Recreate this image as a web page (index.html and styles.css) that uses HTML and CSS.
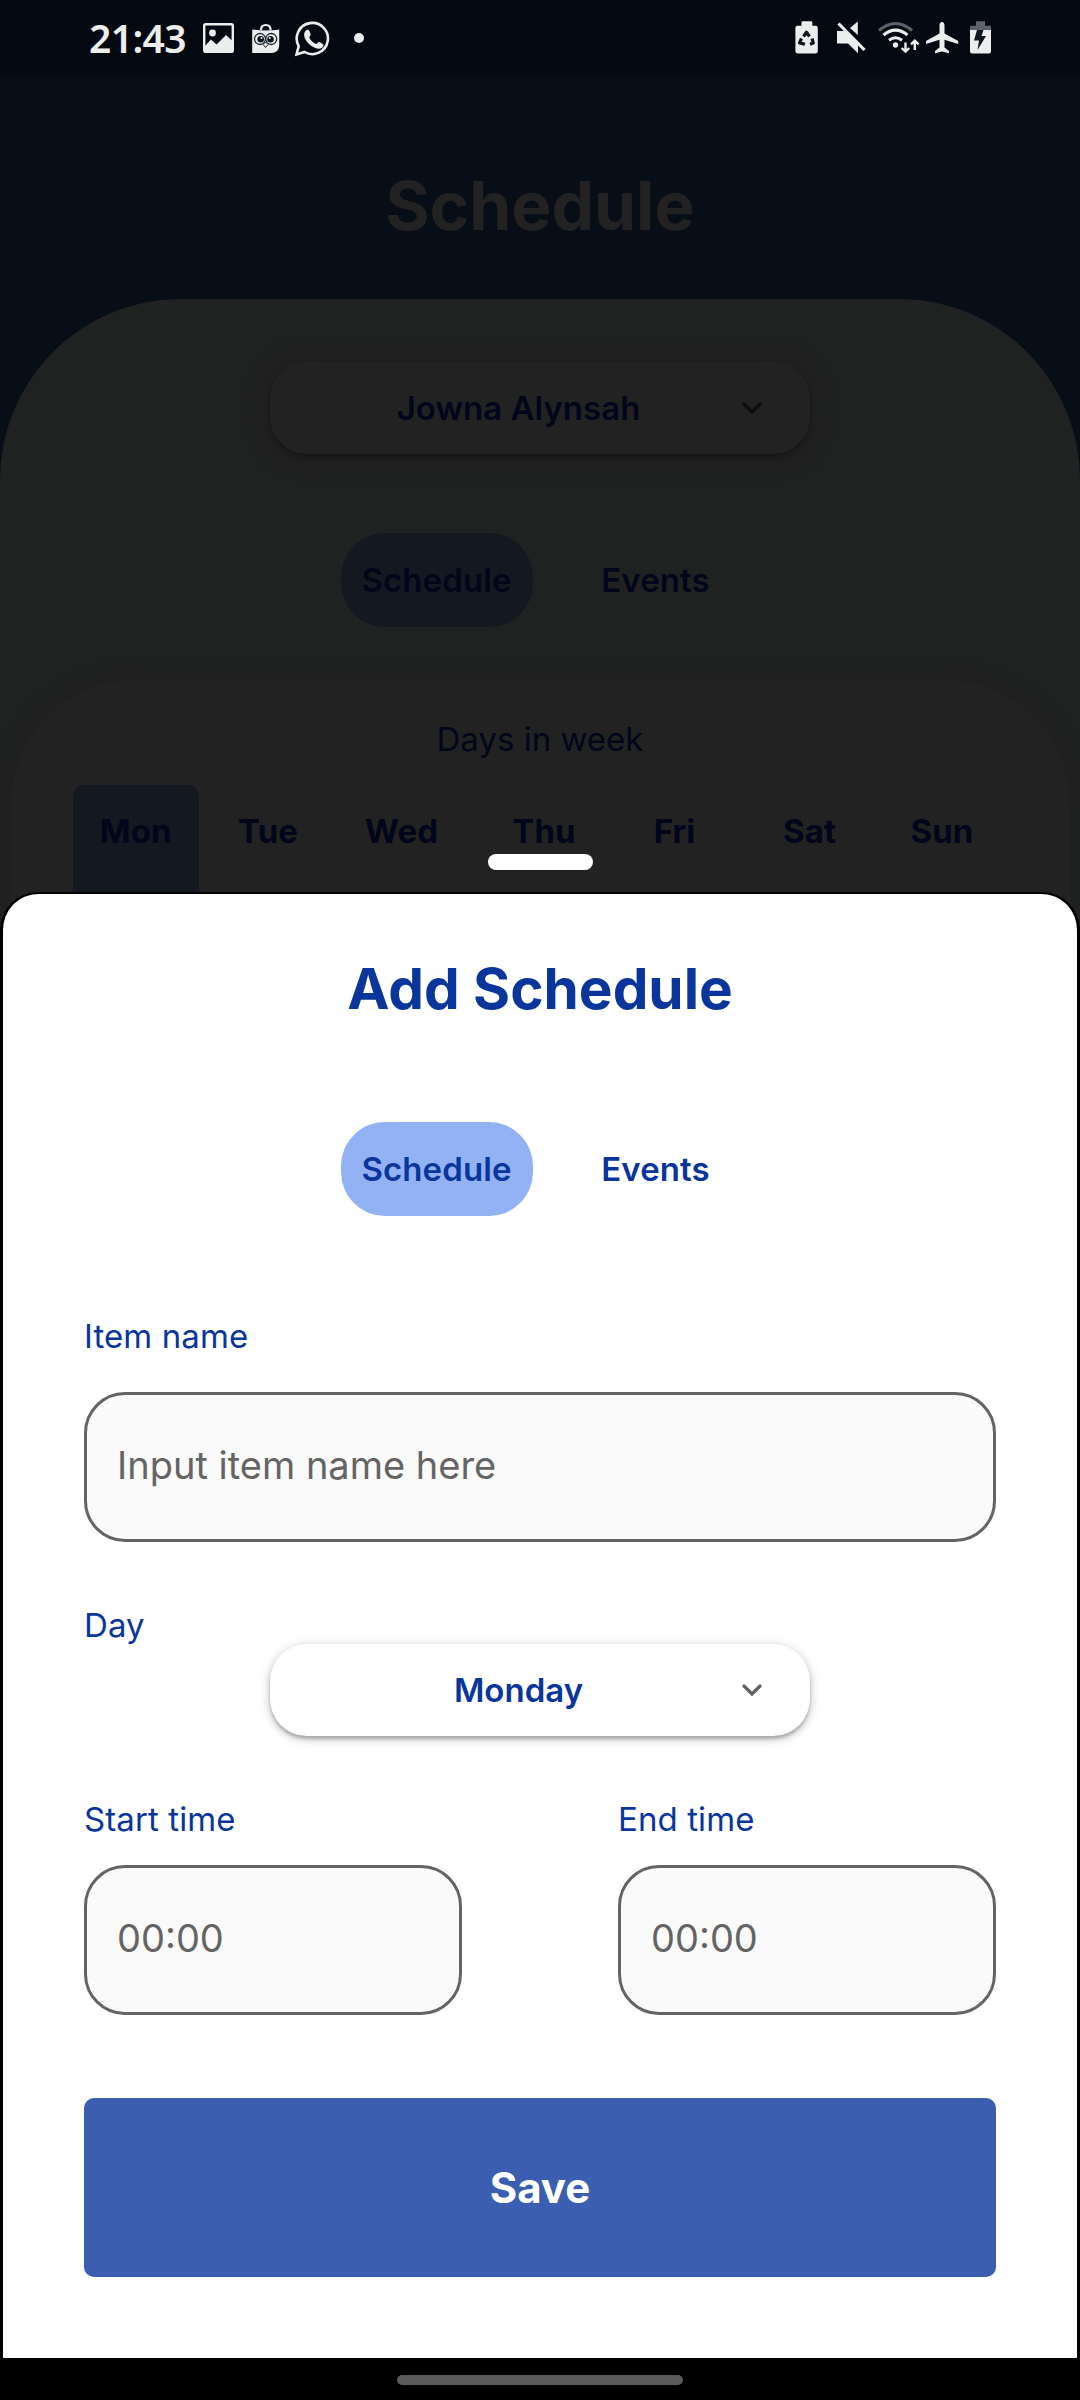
FILE: index.html
```html
<!DOCTYPE html>
<html lang="en">
<head>
<meta charset="utf-8">
<title>Add Schedule</title>
<link rel="stylesheet" href="styles.css">
</head>
<body>
<div class="screen">
  <header class="status">
    <span class="clock">21:43</span>
    <svg class="ico-gallery" width="31" height="40" viewBox="203 18 31 40"><rect x="204.2" y="24.2" width="28.6" height="27.6" rx="1.6" fill="none" stroke="#eceeee" stroke-width="2.4"/><circle cx="212.5" cy="33" r="3.4" fill="#eceeee"/><path d="M204 47l7-7.5 5.500 5 9.500-9.500 7 6.500v10.500h-29z" fill="#eceeee"/></svg>
    <svg class="ico-bag" width="28" height="40" viewBox="252 18 28 40"><path d="M261 30c0-3.500 2-5 4.800-5s4.800 1.500 4.800 5" fill="none" stroke="#eceeee" stroke-width="2.2"/><path d="M252.200 29.500c8 1.200 19 1.200 27 0v15.500c0 5-3 8-8 8h-19z" fill="#eceeee"/><g fill="#eceeee" stroke="#1b2630" stroke-width="1.300"><circle cx="260" cy="39" r="5.500"/><circle cx="271.200" cy="39" r="5.500"/></g><path d="M265.600 42l-2.500 2.500 2.500 3 2.500-3z" fill="#eceeee" stroke="#1b2630" stroke-width="1"/><g fill="#0c141d"><circle cx="260.700" cy="39.300" r="3.300"/><circle cx="270.500" cy="39.300" r="3.300"/></g><g fill="#eceeee"><circle cx="261.500" cy="38" r="1"/><circle cx="269.700" cy="38" r="1"/></g></svg>
    <svg class="ico-chat" width="35" height="40" viewBox="295 18 35 40"><path d="M296.500 54.500l2.200-8.400a15.600 15.600 0 1 1 5.800 5.900z" fill="none" stroke="#eceeee" stroke-width="2.600"/><path d="M306.200 30.200c1.200-.8 2.600-.6 3.100.6l1.400 3.400c.4 1-1.700 2.800-1.500 3.400 1.300 3 3.600 5.100 6.800 6.400.8.300 2.200-2.300 3.200-1.900l3.700 1.800c.9.500.7 2.700-.6 3.700-1.900 1.500-4.300 1.500-7 .4-5-2-8.600-5.500-10.500-9.800-1.300-3-.8-6.300 1.400-8z" fill="#eceeee"/></svg>
    <span class="more-dot"></span>
    <span class="spacer"></span>
    <svg class="ico-saver" width="24" height="40" viewBox="795 18 24 40"><path d="M801.500 22.500q0-1.300 1.300-1.300h8.200q1.300 0 1.300 1.300v3.200h3.400q2.100 0 2.100 2.100v23.500q0 2.100-2.100 2.100h-18.200q-2.100 0-2.100-2.100V27.800q0-2.100 2.100-2.100h4z" fill="#eceeee"/><path d="M803.500 36.500l3-4.200 3 4.200M812 38.500l1.300 4.600-3.300 1.200M801.500 38.500l-2 4.400 5.500 1.400" fill="none" stroke="#10171f" stroke-width="3.200" stroke-linejoin="round"/></svg>
    <svg class="ico-mute" width="30" height="40" viewBox="836 18 30 40"><path d="M837 31h6l2 .3 13 13v9l-10-9.800h-11zM850 28l7.800-6.500v13.500z" fill="#eceeee"/><path d="M838.500 23.500l26 26.500" stroke="#eceeee" stroke-width="3.200"/></svg>
    <svg class="ico-wifi" width="42" height="40" viewBox="878 18 42 40"><g fill="none" stroke-width="3"><path d="M879 30.500q16.500-14 33 0" stroke="#5e636b"/><path d="M883.500 35q12-9.800 24 0" stroke="#eceeee"/><path d="M889 40.200q6.500-4.900 13 0" stroke="#eceeee"/></g><circle cx="895.500" cy="45" r="2.700" fill="#eceeee"/><path d="M905.500 42.500v8.500m-3.800-3l3.800 3.600 3.800-3.600M914.800 50v-9m-3.800 3.300l3.800-3.600 3.800 3.600" fill="none" stroke="#eceeee" stroke-width="2.400"/></svg>
    <svg class="ico-plane" width="33" height="40" viewBox="926 18 33 40"><path d="M942 22c1.500 0 2.500 1.500 2.500 3.500v8l13.700 7.500v3l-13.700-4.200v7.700l4.500 3.500v2.300l-7-1.800-7 1.800V51l4.500-3.500v-7.700L926 44v-3l13.500-7.500v-8c0-2 1-3.500 2.500-3.500z" fill="#eceeee"/></svg>
    <svg class="ico-battery" width="21" height="40" viewBox="970 18 21 40"><path d="M976 21.300h9v4.400h6v4.300h-21v-4.300h6z" fill="#5e636b"/><path d="M970 30h21v21.500q0 2-2 2h-17q-2 0-2-2z" fill="#eceeee"/><path d="M977 30h6.500l-2 6h4.500l-8.500 14 1.500-9.500h-5z" fill="#10171f"/></svg>
  </header>

  <main class="page">
    <h1 class="page-title">Schedule</h1>
    <section class="panel">
      <div class="select select-dim"><span class="select-value">Jowna Alynsah</span><svg class="chevron" width="20" height="12" viewBox="0 0 20 12"><path d="M2 2l8 8 8-8" fill="none" stroke="currentColor" stroke-width="3.200" stroke-linecap="round"/></svg></div>
      <nav class="tabs tabs-dim"><span class="tab tab-active">Schedule</span><span class="tab">Events</span></nav>
      <div class="week">
        <p class="week-title">Days in week</p>
        <div class="days"><span class="day day-active">Mon</span><span class="day">Tue</span><span class="day">Wed</span><span class="day">Thu</span><span class="day">Fri</span><span class="day">Sat</span><span class="day">Sun</span></div>
      </div>
    </section>
  </main>

  <div class="modal">
    <span class="handle"></span>
    <form class="sheet">
      <h2 class="sheet-title">Add Schedule</h2>
      <nav class="tabs"><span class="tab tab-active">Schedule</span><span class="tab">Events</span></nav>
      <div class="label label-item">Item name</div>
      <div class="field">Input item name here</div>
      <div class="label label-day">Day</div>
      <div class="select"><span class="select-value">Monday</span><svg class="chevron" width="20" height="12" viewBox="0 0 20 12"><path d="M2 2l8 8 8-8" fill="none" stroke="currentColor" stroke-width="3.200" stroke-linecap="round"/></svg></div>
      <div class="times">
        <div class="time"><div class="label">Start time</div><div class="field">00:00</div></div>
        <div class="time"><div class="label">End time</div><div class="field">00:00</div></div>
      </div>
      <div class="save">Save</div>
    </form>
    <div class="navbar"><span class="pill"></span></div>
  </div>
</div>
</body>
</html>
```
FILE: styles.css
```css
* { box-sizing: border-box; }
body { margin: 0; font-family: Inter, sans-serif; font-optical-sizing: none; }
h1, h2, p { margin: 0; }

.screen { position: relative; width: 1080px; height: 2400px; overflow: hidden; background: #080e18; }

.status { display: flex; align-items: center; height: 76px; padding: 0 89px; background: #050a12; }
.status svg { flex: none; }
.clock { width: 100px; font: 600 39px/76px "Noto Sans", sans-serif; letter-spacing: -.6px; color: #eceeee; white-space: nowrap; }
.ico-gallery { margin-left: 14px; }
.ico-bag { margin-left: 18px; }
.ico-chat { margin-left: 15px; }
.more-dot { width: 10px; height: 10px; margin-left: 24px; border-radius: 50%; background: #eceeee; }
.spacer { flex: 1; }
.ico-mute { margin-left: 17px; }
.ico-wifi { margin-left: 12px; }
.ico-plane { margin-left: 6px; }
.ico-battery { margin-left: 11px; }

.page { display: flex; flex-direction: column; }
.page-title { padding-top: 90px; height: 223px; font-size: 67.5px; font-weight: 700; line-height: 80px; text-align: center; color: #222; }
.panel { display: flex; flex-direction: column; align-items: center; height: 720px; padding-top: 63px; border-radius: 181px 181px 0 0; background: #202221; }

.select { display: flex; flex: none; align-items: center; align-self: center; width: 540px; height: 92px; padding-left: 45px; padding-right: 48px; border-radius: 37px; background: #fff; color: #0a369c; box-shadow: 0 3px 3px rgba(0,0,0,.2), 0 3px 8px rgba(0,0,0,.14), 0 2px 14px rgba(0,0,0,.12); }
.select-value { flex: 1; padding-right: 29px; margin-right: -9px; font-size: 33px; font-weight: 600; line-height: 40px; text-align: center; }
.chevron { color: #616161; }
.select-dim { background: #222; color: #01061a; box-shadow: 0 3px 4px rgba(0,0,0,.2), 0 3px 10px rgba(10,0,0,.16), 0 1px 22px #201f1f; }
.select-dim .chevron { color: #0d0d0d; }

.tabs { display: flex; flex: none; align-self: center; gap: 47px; width: 399px; height: 94px; color: #0a369c; }
.tab { display: flex; align-items: center; justify-content: center; height: 94px; width: 152px; border-radius: 44px; font-size: 33px; font-weight: 600; line-height: 40px; letter-spacing: .1px; }
.tab-active { width: 192px; background: #92b2f4; }
.tabs-dim { margin-top: 79px; color: #01061a; }
.tabs-dim .tab-active { background: #131821; }

.week { flex: none; width: 1059px; height: 330px; margin-top: 53px; padding: 39px 0 0 62.500px; border-radius: 124px 124px 0 0; background: #222; color: #01061a; box-shadow: 0 0 18px #1f1f1f; }
.week-title { padding-right: 62.500px; font-size: 33px; font-weight: 400; line-height: 40px; text-align: center; }
.days { display: grid; grid-template-columns: 125.5px 139px 128px 157px 104px 166px 99px; margin-top: 26px; }
.day { height: 150px; padding-top: 26px; font-size: 33px; font-weight: 700; line-height: 40px; letter-spacing: .1px; text-align: center; }
.day-active { border-radius: 11px 11px 0 0; background: #131821; }

/* bottom sheet over the dimmed page */
.modal { position: absolute; left: 0; top: 854px; width: 1080px; display: flex; flex-direction: column; align-items: center; }
.handle { width: 105px; height: 16px; margin-bottom: 22px; border-radius: 8px; background: #fff; }
.sheet { display: flex; flex-direction: column; width: 1080px; height: 1466px; padding: 65px 81px 0; border: 3px solid #000; border-top-width: 2px; border-bottom: 0; border-radius: 38px 38px 0 0; background: #fff; color: #0a369c; }
.sheet-title { margin-bottom: 103px; font-size: 56.7px; font-weight: 700; line-height: 60px; text-align: center; }
.label { font-size: 33px; font-weight: 400; line-height: 40px; letter-spacing: .1px; }
.label-item { margin: 100px 0 36px; }
.field { height: 150px; padding: 47px 30px 0; border: 3px solid #646464; border-radius: 41px; background: #fafafa; color: #646464; font-size: 38px; font-weight: 400; line-height: 46px; }
.label-day { height: 40px; margin: 63px 0 -1px; }
.times { display: flex; justify-content: space-between; margin-top: 63px; }
.time { width: 378px; }
.time .field { margin-top: 26px; }
.save { height: 179px; margin-top: 83px; border-radius: 10px; background: #3b5eb0; color: #fff; font-size: 42px; font-weight: 700; line-height: 180px; text-align: center; }
.navbar { display: flex; justify-content: center; width: 1080px; height: 42px; padding-top: 17px; background: #000; }
.pill { width: 286px; height: 10px; border-radius: 5px; background: #5a5a5a; }
```
